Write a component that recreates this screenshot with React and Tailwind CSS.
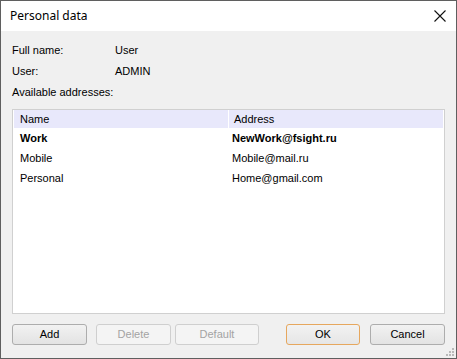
import React from "react";

const rows = [
  { name: "Work", address: "NewWork@fsight.ru", bold: true },
  { name: "Mobile", address: "Mobile@mail.ru" },
  { name: "Personal", address: "Home@gmail.com" },
];

const Button = ({ children, width, disabled, focused }) => {
  let cls = "h-[21px] rounded-[3px] border text-[11px] flex items-center justify-center ";
  if (disabled) cls += "border-[#cfcfcf] bg-[#f4f4f4] text-[#a3a3a3]";
  else if (focused) cls += "border-[#e6a75e] bg-gradient-to-b from-[#f2f2f2] to-[#e6e6e6] text-black";
  else cls += "border-[#adadad] bg-gradient-to-b from-[#f2f2f2] to-[#e3e3e3] text-black";
  return (
    <button className={cls + " " + width}>
      {children}
    </button>
  );
};

export default function App() {
  return (
    <div className="w-[457px] h-[359px] border border-[#5f5f5f] bg-[#f0f0f0] flex flex-col font-['Liberation_Sans',sans-serif] text-[11px] text-black">
      {/* Title bar */}
      <div className="h-[30px] bg-white flex items-center justify-between pl-[9px] pr-[8px]">
        <span className="font-['Noto_Sans',sans-serif] text-[12px] text-black">Personal data</span>
        <svg width="14" height="14" viewBox="0 0 14 14" className="mr-[1px]">
          <path d="M1.5 1.5 L12.5 12.5 M12.5 1.5 L1.5 12.5" stroke="#111" strokeWidth="1.1" />
        </svg>
      </div>

      {/* Body */}
      <div className="flex-1 flex flex-col pl-[11px] pr-[11px] pt-[9px] relative">
        <div className="h-[21px] flex items-center">
          <span className="w-[103px]">Full name:</span>
          <span>User</span>
        </div>
        <div className="h-[21px] flex items-center">
          <span className="w-[103px]">User:</span>
          <span>ADMIN</span>
        </div>
        <div className="h-[21px] flex items-center">Available addresses:</div>

        {/* List */}
        <div className="mt-[6px] h-[205px] border border-[#d0d0d0] bg-white px-[1px]">
          <div className="h-[18px] bg-[#e8e8fb] flex items-center">
            <div className="w-[215px] pl-[6px] border-r border-white h-full flex items-center">Name</div>
            <div className="pl-[5px]">Address</div>
          </div>
          {rows.map((r) => (
            <div key={r.name} className={"h-[20px] flex items-center " + (r.bold ? "font-bold" : "")}>
              <div className="w-[216px] pl-[6px]">{r.name}</div>
              <div className="pl-[2px]">{r.address}</div>
            </div>
          ))}
        </div>

        {/* Buttons */}
        <div className="mt-[10px] flex items-center">
          <Button width="w-[75px]">Add</Button>
          <div className="ml-[9px]">
            <Button width="w-[75px]" disabled>Delete</Button>
          </div>
          <div className="ml-[4px]">
            <Button width="w-[84px]" disabled>Default</Button>
          </div>
          <div className="ml-auto flex gap-[10px]">
            <Button width="w-[74px]" focused>OK</Button>
            <Button width="w-[75px]">Cancel</Button>
          </div>
        </div>

        <svg width="9" height="9" viewBox="0 0 9 9" className="absolute right-[1px] bottom-[1px]">
          <rect x="6" y="0" width="2" height="2" fill="#b9b9b9" />
          <rect x="3" y="3" width="2" height="2" fill="#b9b9b9" />
          <rect x="6" y="3" width="2" height="2" fill="#b9b9b9" />
          <rect x="0" y="6" width="2" height="2" fill="#b9b9b9" />
          <rect x="3" y="6" width="2" height="2" fill="#b9b9b9" />
          <rect x="6" y="6" width="2" height="2" fill="#b9b9b9" />
        </svg>
      </div>
    </div>
  );
}
